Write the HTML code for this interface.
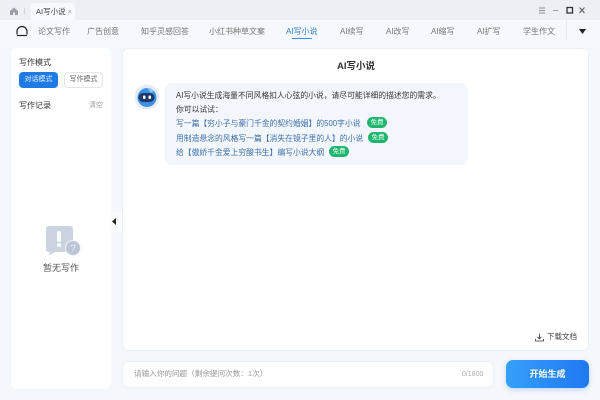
<!DOCTYPE html>
<html lang="zh"><head><meta charset="utf-8">
<style>
*{box-sizing:border-box;margin:0;padding:0}
html,body{width:600px;height:400px;overflow:hidden;background:#f4f7fb;font-family:"Liberation Sans","Noto Sans CJK SC",sans-serif;color:#333}
#w{position:absolute;left:0;top:0;width:600px;height:400px;filter:blur(.3px)}
.a{position:absolute;white-space:nowrap}
.top{left:0;top:0;width:600px;height:20px;background:#eceff3}
.tabbar{left:0;top:20px;width:600px;height:28px;background:#f5f8fc}
.tab{left:31px;top:3px;width:44px;height:17px;background:#f7f9fc;border-radius:3px 3px 0 0;font-size:7.5px;color:#444;line-height:17px;padding-left:5px}
.n{top:26px;font-size:8px;line-height:11px;color:#777}
.side{left:11px;top:48px;width:100px;height:341px;background:#fff;border-radius:6px}
.main{left:122px;top:48px;width:467px;height:303px;background:#fff;border:1px solid #edf0f4;border-radius:6px}
.t{font-size:8px;color:#444;line-height:11px}
.bubble{left:165px;top:83px;width:303px;height:82px;background:#f3f7fd;border-radius:7px}
.l{left:176px;font-size:7.8px;line-height:11px}
.free{height:11px;border-radius:6px;background:#1fb56f;color:#eafff4;font-size:6.500px;line-height:11px;text-align:center;width:20px}
</style></head><body><div id="w">
<div class="a top"></div>
<div class="a tabbar"></div>
<svg class="a" style="left:9px;top:6px" width="10" height="10" viewBox="0 0 10 10"><path d="M1 5 5 1.500l4 3.500v4H6V6.500H4V9H1z" fill="#9a9fa8"/></svg>
<div class="a" style="left:24px;top:8px;width:1px;height:6px;background:#cfd3d9"></div>
<div class="a tab">AI写小说 <span style="color:#999">×</span></div>
<svg class="a" style="left:536px;top:5px" width="54" height="11" viewBox="0 0 54 11"><path d="M3 3h6M3 5.500h6M3 8h6" stroke="#8a8f96" fill="none"/><path d="M17 5.500h5" stroke="#9a9ea5"/><rect x="31" y="2.500" width="5.500" height="5.500" fill="none" stroke="#333" stroke-width="1.300"/><path d="M43.500 2.500l5 5.500M48.500 2.500l-5 5.500" stroke="#555"/></svg>
<svg class="a" style="left:16px;top:26px" width="12" height="11" viewBox="0 0 12 11"><path d="M1 8.500V5.500a5 5 0 0 1 10 0v3" fill="none" stroke="#222" stroke-width="1.200"/><path d="M1 9.500h10" stroke="#222" stroke-width="1.200"/></svg>
<div class="a n" style="left:38px">论文写作</div>
<div class="a n" style="left:87px">广告创意</div>
<div class="a n" style="left:141px">知乎灵感回答</div>
<div class="a n" style="left:209px">小红书种草文案</div>
<div class="a n" style="left:286px;color:#2f80d8">AI写小说</div>
<div class="a" style="left:292px;top:38px;width:20px;height:1.200px;background:#3d8fe0"></div>
<div class="a n" style="left:340px">AI续写</div>
<div class="a n" style="left:386px">AI改写</div>
<div class="a n" style="left:431px">AI缩写</div>
<div class="a n" style="left:477px">AI扩写</div>
<div class="a n" style="left:523px">学生作文</div>
<div class="a" style="left:566px;top:20px;width:1px;height:20px;background:#e6e9ee"></div>
<svg class="a" style="left:579px;top:29px" width="7" height="5"><path d="M0 0h7L3.500 5z" fill="#222"/></svg>

<div class="a side"></div>
<div class="a t" style="left:19px;top:57px;color:#333">写作模式</div>
<div class="a" style="left:19px;top:72px;width:39px;height:16px;border-radius:4px;background:#1f7ae6;color:#e8f2ff;font-size:7px;line-height:16px;text-align:center">对话模式</div>
<div class="a" style="left:64px;top:72px;width:39px;height:16px;border-radius:4px;background:#fff;border:1px solid #e3e6ea;color:#666;font-size:7px;line-height:14px;text-align:center">写作模式</div>
<div class="a t" style="left:19px;top:100px;color:#333">写作记录</div>
<div class="a" style="left:89px;top:101px;font-size:7px;line-height:10px;color:#999">清空</div>
<svg class="a" style="left:45px;top:225px" width="37" height="33" viewBox="0 0 37 33"><path d="M4 1h21q3 0 3 3v20q0 3-3 3H10l-6 3.500 1-3.500H4q-3 0-3-3V4q0-3 3-3z" fill="#ccd3e0"/><rect x="12" y="6" width="4" height="11" rx="2" fill="#fff"/><circle cx="14" cy="20" r="2" fill="#fff"/><circle cx="28" cy="23" r="7.500" fill="#bcc5d6" stroke="#f2f4f8"/><text x="28" y="26.500" font-size="10" fill="#eef1f6" text-anchor="middle" font-family="Liberation Sans">?</text></svg>
<div class="a" style="left:43px;top:262px;font-size:9px;line-height:12px;color:#555">暂无写作</div>

<div class="a" style="left:111px;top:212px;width:11px;height:20px;background:#fafbfd"></div>
<svg class="a" style="left:112px;top:218px" width="5" height="7"><path d="M4 0v7L0 3.500z" fill="#222"/></svg>

<div class="a main"></div>
<div class="a" style="left:337px;top:60px;font-size:9.500px;line-height:13px;font-weight:bold;color:#333">AI写小说</div>
<svg class="a" style="left:134px;top:84px" width="26" height="26" viewBox="0 0 26 26"><circle cx="13" cy="13" r="12.500" fill="#e3eefa"/><circle cx="13" cy="13.500" r="9.500" fill="#3f8fe4"/><path d="M13 4a9 9 0 0 1 7 3l-3 2z" fill="#8cc4f4"/><rect x="4.500" y="9" width="16" height="9" rx="4.500" fill="#1f3a6a"/><rect x="9" y="11.500" width="2.500" height="3.500" rx="1" fill="#fff"/><rect x="14.500" y="11.500" width="2.500" height="3.500" rx="1" fill="#fff"/></svg>
<div class="a bubble"></div>
<div class="a l" style="top:90px;color:#333">AI写小说生成海量不同风格扣人心弦的小说，请尽可能详细的描述您的需求。</div>
<div class="a l" style="top:104px;color:#333">你可以试试：</div>
<div class="a l" style="top:118px;color:#3c6ea8">写一篇【穷小子与豪门千金的契约婚姻】的500字小说</div>
<div class="a free" style="left:367px;top:117px">免费</div>
<div class="a l" style="top:132.500px;color:#3c6ea8">用制造悬念的风格写一篇【消失在镜子里的人】的小说</div>
<div class="a free" style="left:368px;top:132px">免费</div>
<div class="a l" style="top:147px;color:#3c6ea8">给【傲娇千金爱上穷酸书生】编写小说大纲</div>
<div class="a free" style="left:329px;top:146px">免费</div>

<svg class="a" style="left:535px;top:333px" width="9" height="9" viewBox="0 0 9 9"><path d="M4.500 0.500v5M2.500 3.800l2 2 2-2M0.500 6v2h8V6" fill="none" stroke="#333" stroke-width=".8"/></svg>
<div class="a" style="left:547px;top:331px;font-size:7.500px;line-height:11px;color:#444">下载文档</div>

<div class="a" style="left:122px;top:361px;width:372px;height:27px;background:#fff;border:1px solid #edf0f4;border-radius:6px"></div>
<div class="a" style="left:134px;top:369px;font-size:7.600px;line-height:10px;color:#999">请输入你的问题（剩余提问次数：1次）</div>
<div class="a" style="left:462px;top:370px;font-size:7px;line-height:10px;color:#aaa">0/1800</div>
<div class="a" style="left:506px;top:360px;width:83px;height:28px;border-radius:7px;background:linear-gradient(90deg,#35a0fb,#1f78f0);box-shadow:0 2px 5px rgba(40,130,240,.25);color:#fff;font-size:9px;font-weight:bold;line-height:28px;text-align:center">开始生成</div>
</div></body></html>
